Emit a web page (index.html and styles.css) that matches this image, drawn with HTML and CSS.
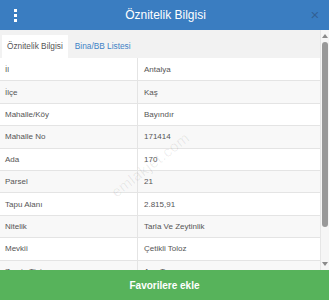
FILE: index.html
```html
<!DOCTYPE html>
<html lang="tr">
<head>
    <meta charset="UTF-8">
    <meta name="viewport" content="width=device-width, initial-scale=1.0">
    <title>Öznitelik Bilgisi</title>
    <link rel="stylesheet" href="styles.css">
</head>
<body>
    <div class="panel">
        <div class="header">
            <div class="menu-btn">
                <span class="dot"></span>
                <span class="dot"></span>
                <span class="dot"></span>
            </div>
            <h1>Öznitelik Bilgisi</h1>
            <div class="close-btn">×</div>
        </div>

        <div class="main">
            <div class="content">
                <div class="tabs">
                    <div class="tab active">Öznitelik Bilgisi</div>
                    <div class="tab">Bina/BB Listesi</div>
                </div>

                <div class="attr-table">
                    <div class="row"><div class="cell key">İl</div><div class="cell">Antalya</div></div>
                    <div class="row"><div class="cell key">İlçe</div><div class="cell">Kaş</div></div>
                    <div class="row"><div class="cell key">Mahalle/Köy</div><div class="cell">Bayındır</div></div>
                    <div class="row"><div class="cell key">Mahalle No</div><div class="cell">171414</div></div>
                    <div class="row"><div class="cell key">Ada</div><div class="cell">170</div></div>
                    <div class="row"><div class="cell key">Parsel</div><div class="cell">21</div></div>
                    <div class="row"><div class="cell key">Tapu Alanı</div><div class="cell">2.815,91</div></div>
                    <div class="row"><div class="cell key">Nitelik</div><div class="cell">Tarla Ve Zeytinlik</div></div>
                    <div class="row"><div class="cell key">Mevkii</div><div class="cell">Çetikli Toloz</div></div>
                    <div class="row"><div class="cell key">Zemin Tipi</div><div class="cell">Ana Taşınmaz</div></div>
                </div>

                <div class="watermark">emlakjet.com</div>
            </div>

            <div class="scrollbar">
                <div class="arrow up"></div>
                <div class="thumb"></div>
                <div class="arrow down"></div>
            </div>
        </div>

        <div class="footer-btn">Favorilere ekle</div>
    </div>
</body>
</html>
```

FILE: styles.css
```css
* {
    margin: 0;
    padding: 0;
    box-sizing: border-box;
}

body {
    font-family: "Liberation Sans", Arial, sans-serif;
    background: #fff;
    color: #555;
}

.panel {
    width: 329px;
    height: 300px;
    display: flex;
    flex-direction: column;
    overflow: hidden;
}

.header {
    height: 30px;
    background: #3a7dc1;
    display: flex;
    align-items: center;
    color: white;
}

.menu-btn {
    width: 30px;
    height: 30px;
    display: flex;
    flex-direction: column;
    align-items: center;
    justify-content: center;
    gap: 2px;
}

.dot {
    width: 3px;
    height: 3px;
    background: white;
    display: block;
}

.header h1 {
    flex: 1;
    text-align: center;
    font-size: 12px;
    font-weight: normal;
    padding-left: 2px;
}

.close-btn {
    width: 30px;
    text-align: center;
    font-size: 15px;
    line-height: 30px;
    color: rgba(40, 60, 90, 0.45);
    padding-left: 2px;
}

.main {
    flex: 1;
    display: flex;
    min-height: 0;
}

.content {
    flex: 1;
    overflow: hidden;
    position: relative;
    border-right: 1px solid #e6e6e6;
}

.tabs {
    height: 28px;
    background: #f2f2f2;
    display: flex;
    align-items: flex-end;
    padding-left: 2px;
    gap: 2px;
}

.tab {
    height: 23px;
    line-height: 23px;
    padding: 0 5px;
    font-size: 8.3px;
    color: #3f82c6;
}

.tab.active {
    background: white;
    color: #555;
}

.attr-table {
    display: flex;
    flex-direction: column;
}

.row {
    height: 22.4px;
    display: grid;
    grid-template-columns: 138px 1fr;
    border-top: 1px solid #e4e4e4;
    font-size: 8px;
}

.row:first-child {
    border-top: none;
}

.row:nth-child(even) {
    background: #f8f8f8;
}

.cell {
    display: flex;
    align-items: center;
    padding-left: 6px;
}

.cell.key {
    padding-left: 5px;
    border-right: 1px solid #e4e4e4;
}

.watermark {
    position: absolute;
    left: 103px;
    top: 126px;
    font-size: 15px;
    color: rgba(0, 0, 0, 0.07);
    transform: rotate(-38deg);
    letter-spacing: 0.5px;
}

.scrollbar {
    width: 8px;
    background: #f6f6f6;
    display: flex;
    flex-direction: column;
    align-items: center;
    padding: 4px 0 4px;
}

.arrow {
    width: 0;
    height: 0;
    border-left: 3px solid transparent;
    border-right: 3px solid transparent;
}

.arrow.up {
    border-bottom: 4px solid #8a8a8a;
}

.arrow.down {
    border-top: 4px solid #8a8a8a;
}

.thumb {
    width: 6px;
    height: 185px;
    margin: 4px 0 auto;
    background: #999;
    border-radius: 3px;
}

.footer-btn {
    height: 30px;
    background: #57b35b;
    color: white;
    font-size: 10px;
    font-weight: bold;
    display: flex;
    align-items: center;
    justify-content: center;
}
```
